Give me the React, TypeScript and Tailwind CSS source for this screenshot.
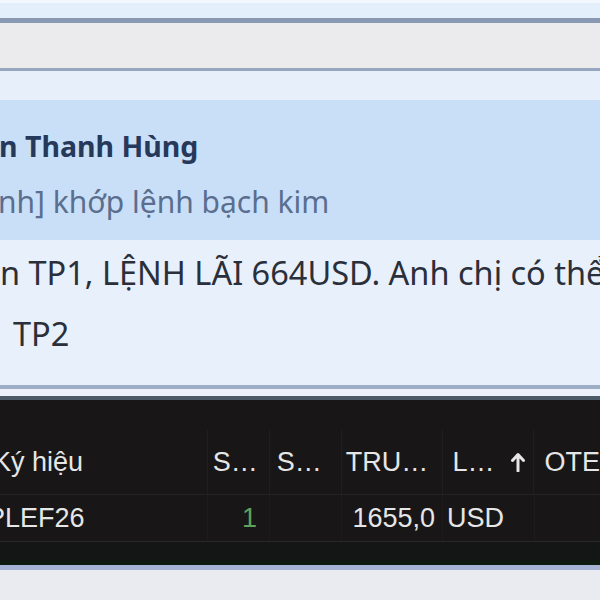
export default function App() {
  return (
    <div className="w-[600px] h-[600px] overflow-hidden bg-[#eaebef] flex flex-col" style={{ fontFamily: "'Noto Sans', 'Open Sans', sans-serif" }}>
      {/* top strips */}
      <div className="h-[3px] bg-[#f3f8fe]" />
      <div className="h-[15px] bg-[#e4effc]" />
      <div className="h-[5px] bg-[#8a99b3]" />
      <div className="h-[45px] bg-[#ebebed]" />
      <div className="h-[3px] bg-[#97a6bf]" />
      <div className="h-[29px] bg-[#e7effb]" />

      {/* message card */}
      <div className="h-[140px] bg-[#c9dff8] flex flex-col pt-[26px]">
        <div className="text-[28.5px] font-bold text-[#27395a] leading-[40px] ml-[-1px] whitespace-nowrap">n Thanh Hùng</div>
        <div className="text-[30px] text-[#5b6e8e] leading-[40px] mt-[16px] ml-[-2px] whitespace-nowrap">nh] khớp lệnh bạch kim</div>
      </div>
      <div className="h-[145px] bg-[#e8f0fb] flex flex-col pt-[13px] text-[#2a2f3a]">
        <div className="text-[32.5px] leading-[40px] whitespace-nowrap">n TP1, LỆNH LÃI 664USD. Anh chị có thể</div>
        <div className="text-[32.5px] leading-[40px] mt-[21px] pl-[13px]">TP2</div>
      </div>
      <div className="h-[4px] bg-[#9eaec6]" />
      <div className="h-[7px] bg-[#edf2fa]" />
      <div className="h-[4px] bg-[#4e5c6a]" />

      {/* positions table */}
      <div className="h-[165px] bg-[#181617] flex flex-col text-[#e6e6e6] text-[27px]" style={{ fontFamily: "'Liberation Sans', Arial, sans-serif" }}>
        <div className="h-[30px]" />
        <div className="h-[65px] flex items-center border-b border-[#252324]">
          <div className="w-[208px] h-full flex items-center border-r border-[#201e1f]">
            <span className="ml-[-7px]">Ký hiệu</span>
          </div>
          <div className="w-[62px] h-full flex items-center border-r border-[#201e1f] pl-[5px]">S…</div>
          <div className="w-[72px] h-full flex items-center border-r border-[#201e1f] pl-[7px]">S…</div>
          <div className="w-[101px] h-full flex items-center border-r border-[#201e1f] pl-[4px]">TRU…</div>
          <div className="w-[92px] h-full flex items-center border-r border-[#201e1f] pl-[10px] gap-[16px]">
            L…
            <svg width="14" height="20" viewBox="0 0 14 20" className="shrink-0">
              <path d="M7 19V3M1.5 8.5L7 2.5l5.5 6" stroke="#e6e6e6" strokeWidth="3" fill="none" strokeLinecap="round" strokeLinejoin="round" />
            </svg>
          </div>
          <div className="pl-[10px]">OTE</div>
        </div>
        <div className="h-[47px] flex items-center border-b border-[#2a2829]">
          <div className="w-[208px] h-full flex items-center border-r border-[#1d1b1c]">
            <span className="ml-[-13px]">PLEF26</span>
          </div>
          <div className="w-[62px] h-full flex items-center justify-end border-r border-[#1d1b1c] pr-[12px] text-[#5da35d]">1</div>
          <div className="w-[72px] h-full border-r border-[#1d1b1c]" />
          <div className="w-[101px] h-full flex items-center justify-end border-r border-[#1d1b1c] pr-[7px]">1655,0</div>
          <div className="w-[92px] h-full flex items-center border-r border-[#1d1b1c] pl-[4px]">USD</div>
          <div className="flex-1 h-full" />
        </div>
        <div className="flex-1 bg-[#141615]" />
        <div className="h-[4px] bg-[#0f1a11]" />
      </div>
      <div className="h-[5px] bg-[#a8b2d4]" />
      <div className="flex-1 bg-[#eaebf0]" />
    </div>
  );
}
